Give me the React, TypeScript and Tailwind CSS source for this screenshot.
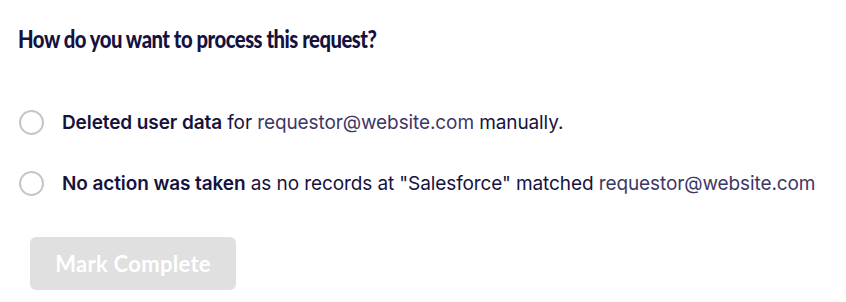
import { useState } from 'react';

const options = [
  { id: 'deleted', bold: 'Deleted user data', pre: ' for ', email: 'requestor@website.com', post: ' manually.' },
  { id: 'none', bold: 'No action was taken', pre: ' as no records at "Salesforce" matched ', email: 'requestor@website.com', post: '' },
];

export default function App() {
  const [selected, setSelected] = useState<string | null>(null);

  return (
    <div className="bg-white w-[846px] h-[302px] px-[18px] pt-[22px] text-[#16123e]">
      {/* heading font is a condensed geometric face in the original, squeeze Lato a bit */}
      <h2 className="text-[25px] leading-[32px] font-black tracking-[-0.6px] font-['Lato',sans-serif] origin-left scale-x-[0.81] whitespace-nowrap">
        How do you want to process this request?
      </h2>

      <div className="mt-[56px] flex flex-col gap-[36px]">
        {options.map((o) => (
          <label key={o.id} className="flex items-center gap-[18px] cursor-pointer">
            <input
              type="radio"
              name="process"
              className="sr-only"
              checked={selected === o.id}
              onChange={() => setSelected(o.id)}
            />
            <span className="w-[25px] h-[25px] ml-[1px] rounded-full border-[2.5px] border-[#c6c6c6] shrink-0" />
            <span className="text-[19px] leading-[24px] tracking-[-0.1px] font-['Inter',sans-serif]">
              <span className="font-semibold">{o.bold}</span>
              {o.pre}
              <span className="text-[#3d3766]">{o.email}</span>
              {o.post}
            </span>
          </label>
        ))}
      </div>

      <button
        disabled
        className="mt-[41px] ml-[12px] w-[206px] h-[53px] rounded-[6px] bg-[#e0e0e0] text-white text-[22px] tracking-[0.3px] font-bold font-['Lato',sans-serif]"
      >
        Mark Complete
      </button>
    </div>
  );
}
